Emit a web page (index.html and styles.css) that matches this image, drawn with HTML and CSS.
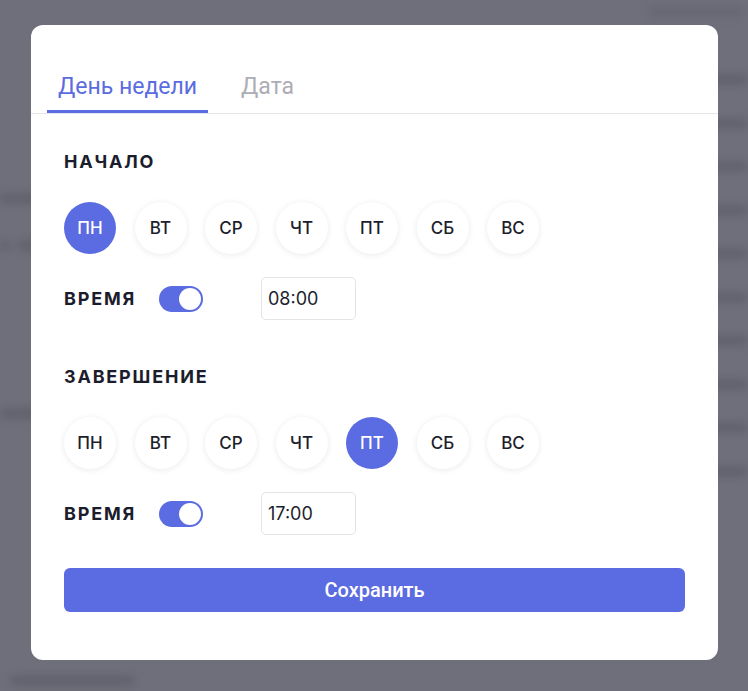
FILE: index.html
```html
<!DOCTYPE html>
<html lang="ru">
<head>
<meta charset="utf-8">
<title>Расписание</title>
<link rel="stylesheet" href="styles.css">
</head>
<body>
<div class="page">
  <aside class="page-left">
    <div class="ghost g-left1"></div>
    <div class="ghost-pair"><div class="ghost g-short"></div><div class="ghost g-short2"></div></div>
    <div class="ghost g-left3"></div>
    <div class="ghost g-left4"></div>
  </aside>
  <div class="page-right">
    <div class="ghost g-top"></div>
    <div class="ghost-list">
      <div class="ghost g-r"></div>
      <div class="ghost g-r"></div>
      <div class="ghost g-r"></div>
      <div class="ghost g-r"></div>
      <div class="ghost g-r"></div>
      <div class="ghost g-r"></div>
      <div class="ghost g-r"></div>
      <div class="ghost g-r"></div>
      <div class="ghost g-r"></div>
      <div class="ghost g-r"></div>
    </div>
  </div>
</div>

<div class="overlay">
  <div class="modal">
    <div class="tabs">
      <div class="tab active">День недели</div>
      <div class="tab">Дата</div>
    </div>
    <div class="content">
      <section class="block">
        <h3 class="heading">НАЧАЛО</h3>
        <div class="days">
          <span class="day selected">ПН</span>
          <span class="day">ВТ</span>
          <span class="day">СР</span>
          <span class="day">ЧТ</span>
          <span class="day">ПТ</span>
          <span class="day">СБ</span>
          <span class="day">ВС</span>
        </div>
        <div class="time-row">
          <span class="heading label">ВРЕМЯ</span>
          <span class="toggle"><span class="knob"></span></span>
          <span class="time-input">08:00</span>
        </div>
      </section>
      <section class="block second">
        <h3 class="heading">ЗАВЕРШЕНИЕ</h3>
        <div class="days">
          <span class="day">ПН</span>
          <span class="day">ВТ</span>
          <span class="day">СР</span>
          <span class="day">ЧТ</span>
          <span class="day selected">ПТ</span>
          <span class="day">СБ</span>
          <span class="day">ВС</span>
        </div>
        <div class="time-row">
          <span class="heading label">ВРЕМЯ</span>
          <span class="toggle"><span class="knob"></span></span>
          <span class="time-input">17:00</span>
        </div>
      </section>
      <button class="save">Сохранить</button>
    </div>
  </div>
</div>
</body>
</html>
```

FILE: styles.css
```css
* { box-sizing: border-box; }

html, body {
  margin: 0;
  width: 748px;
  height: 691px;
  overflow: hidden;
}

body {
  background: #6f6f7b;
  font-family: Inter, "Noto Sans", sans-serif;
  position: relative;
}

/* blurred page behind the overlay */
.page {
  display: flex;
  justify-content: space-between;
  height: 691px;
  filter: blur(4px);
}

.page-left {
  width: 140px;
  display: flex;
  flex-direction: column;
}

.ghost {
  height: 9px;
  border-radius: 4px;
  background: #5f606c;
}

.g-left1 { margin-top: 194px; width: 40px; }
.ghost-pair { margin-top: 38px; display: flex; gap: 8px; }
.g-short { width: 10px; }
.g-short2 { width: 20px; }
.g-left3 { margin-top: 159px; width: 40px; }
.g-left4 { margin-top: 258px; width: 125px; margin-left: 10px; }

.page-right {
  width: 100px;
  display: flex;
  flex-direction: column;
}

.g-top { margin-top: 7px; width: 96px; opacity: 0.6; }

.ghost-list {
  margin-top: 59px;
  display: flex;
  flex-direction: column;
  gap: 34.5px;
}

.g-r { width: 100px; }

/* overlay + modal */
.overlay {
  position: absolute;
  inset: 0;
  padding: 25px 0 0 31px;
}

.modal {
  width: 687px;
  height: 635px;
  background: #ffffff;
  border-radius: 12px;
  overflow: hidden;
}

.tabs {
  display: flex;
  gap: 22px;
  padding: 48px 16px 0;
  border-bottom: 1px solid #e6e6ea;
}

.tab {
  font-family: Roboto, "Liberation Sans", sans-serif;
  font-size: 23px;
  line-height: 27px;
  padding: 0 11px 10px;
  color: #adadb6;
  border-bottom: 3px solid transparent;
}

.tab.active {
  color: #5b6be1;
  border-bottom-color: #5b6be1;
}

.content {
  padding: 37px 33px 0;
}

.heading {
  margin: 0;
  font-family: Inter, "Noto Sans", sans-serif;
  font-weight: 700;
  font-size: 18px;
  line-height: 22px;
  letter-spacing: 1.8px;
  color: #1b1c2c;
}

.days {
  display: flex;
  gap: 18.5px;
  margin-top: 29px;
}

.day {
  width: 52px;
  height: 52px;
  border-radius: 50%;
  background: #fff;
  box-shadow: 0 1px 6px rgba(20, 20, 40, 0.09);
  display: flex;
  align-items: center;
  justify-content: center;
  font-size: 17px;
  font-weight: 500;
  color: #1d1e2c;
}

.day.selected {
  background: #5b6be1;
  color: #fff;
  box-shadow: none;
}

.time-row {
  display: flex;
  align-items: center;
  margin-top: 23px;
  height: 43px;
}

.label {
  width: 95px;
}

.toggle {
  width: 44px;
  height: 26px;
  border-radius: 13px;
  background: #5b6be1;
  padding: 2px;
  display: flex;
  justify-content: flex-end;
  margin-right: 58px;
}

.knob {
  width: 22px;
  height: 22px;
  border-radius: 50%;
  background: #fff;
}

.time-input {
  width: 95px;
  height: 43px;
  border: 1px solid #e4e4e8;
  border-radius: 5px;
  padding-left: 6px;
  display: flex;
  align-items: center;
  font-size: 18px;
  color: #1d1e2c;
}

.block.second {
  margin-top: 46px;
}

.save {
  display: block;
  width: 621px;
  height: 44px;
  margin-top: 33px;
  border: none;
  border-radius: 6px;
  background: #5b6be1;
  color: #fff;
  font-family: Roboto, "Liberation Sans", sans-serif;
  font-size: 20px;
  font-weight: 500;
}
```
